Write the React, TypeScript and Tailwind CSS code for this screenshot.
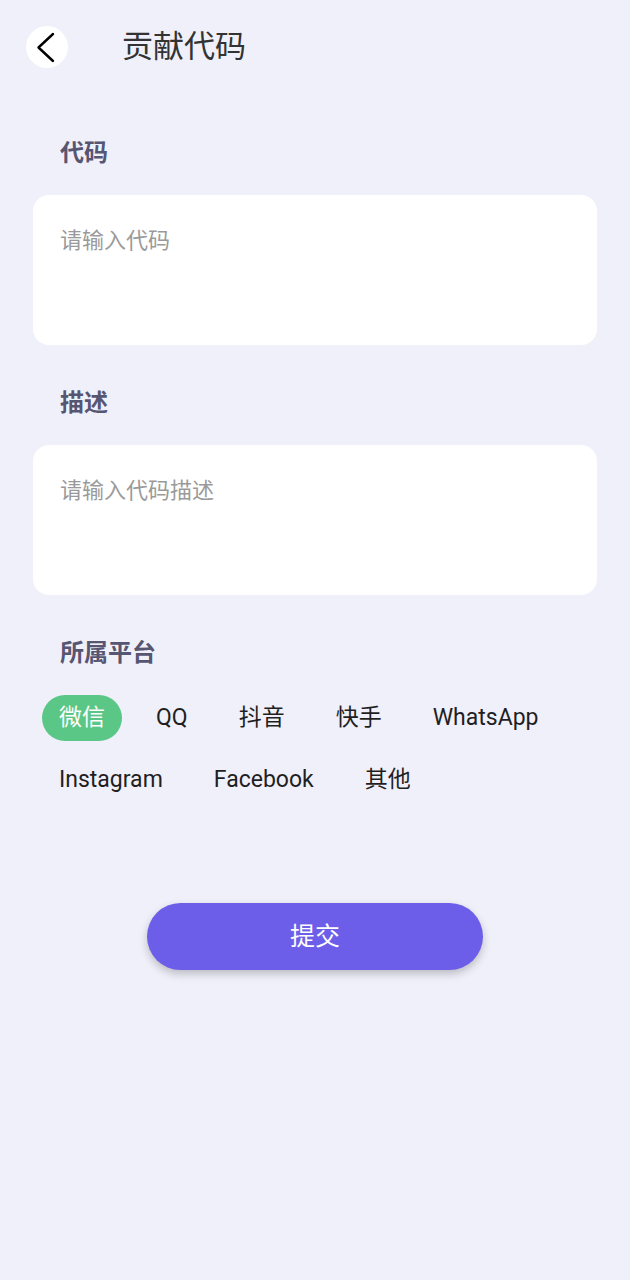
import { useState } from "react"

const platforms = ["微信", "QQ", "抖音", "快手", "WhatsApp", "Instagram", "Facebook", "其他"]

function Field({ label, placeholder }: { label: string; placeholder: string }) {
  return (
    <div className="flex flex-col">
      <div className="pl-[60px] text-[24px] leading-[32px] font-bold text-[#565672]">{label}</div>
      <div className="mx-[33px] mt-[26px] h-[150px] rounded-[16px] bg-white px-[27px] pt-[33px]">
        <div className="text-[22px] leading-[26px] text-[#9a9a9a]">{placeholder}</div>
      </div>
    </div>
  )
}

export default function App() {
  const [active, setActive] = useState("微信")

  return (
    <div
      className="min-h-[1280px] bg-[#f0f0fa]"
      style={{ fontFamily: "Roboto, 'Noto Sans CJK SC', sans-serif" }}
    >
      {/* Header */}
      <div className="flex items-center pt-[26px] pl-[26px]">
        <button className="flex h-[42px] w-[42px] items-center justify-center rounded-full bg-white">
          <svg width="42" height="42" viewBox="0 0 42 42" fill="none">
            <path d="M27 8 L12.5 21.5 L27 35" stroke="#000" strokeWidth="2.4" strokeLinecap="round" strokeLinejoin="round" />
          </svg>
        </button>
        <h1 className="ml-[54px] text-[31px] leading-[42px] text-[#333333]">贡献代码</h1>
      </div>

      <div className="mt-[69px] flex flex-col gap-[42px]">
        <Field label="代码" placeholder="请输入代码" />
        <Field label="描述" placeholder="请输入代码描述" />

        {/* Platform */}
        <div className="flex flex-col">
          <div className="pl-[60px] text-[24px] leading-[32px] font-bold text-[#565672]">所属平台</div>
          <div className="mt-[26px] flex flex-wrap gap-x-[17px] gap-y-[16px] pl-[42px] pr-[33px]">
            {platforms.map((p) => (
              <button
                key={p}
                onClick={() => setActive(p)}
                className={
                  p === active
                    ? "h-[46px] rounded-full bg-[#5ac786] px-[17px] text-[23px] text-white"
                    : "h-[46px] rounded-full px-[17px] text-[23px] text-[#1f1f1f]"
                }
              >
                {p}
              </button>
            ))}
          </div>
        </div>
      </div>

      {/* Submit */}
      <div className="mt-[100px] flex justify-center">
        <button className="h-[67px] w-[336px] rounded-full bg-[#6c5ee9] text-[25px] text-white shadow-[0_4px_8px_rgba(0,0,0,0.22)]">
          提交
        </button>
      </div>
    </div>
  )
}
